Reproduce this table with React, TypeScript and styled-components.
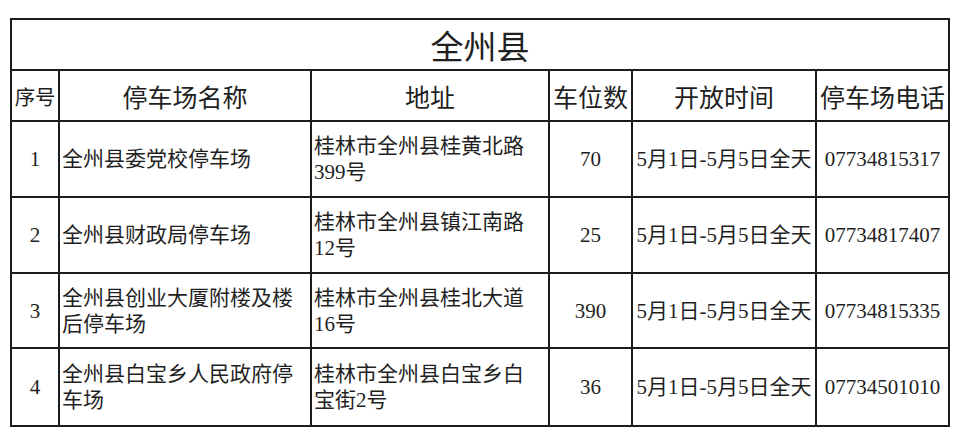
import styled, { createGlobalStyle } from "styled-components";

type Lot = {
  no: number;
  name: string[];
  address: string[];
  spaces: number;
  hours: string;
  phone: string;
};

const lots: Lot[] = [
  {
    no: 1,
    name: ["全州县委党校停车场"],
    address: ["桂林市全州县桂黄北路", "399号"],
    spaces: 70,
    hours: "5月1日-5月5日全天",
    phone: "07734815317",
  },
  {
    no: 2,
    name: ["全州县财政局停车场"],
    address: ["桂林市全州县镇江南路", "12号"],
    spaces: 25,
    hours: "5月1日-5月5日全天",
    phone: "07734817407",
  },
  {
    no: 3,
    name: ["全州县创业大厦附楼及楼", "后停车场"],
    address: ["桂林市全州县桂北大道", "16号"],
    spaces: 390,
    hours: "5月1日-5月5日全天",
    phone: "07734815335",
  },
  {
    no: 4,
    name: ["全州县白宝乡人民政府停", "车场"],
    address: ["桂林市全州县白宝乡白", "宝街2号"],
    spaces: 36,
    hours: "5月1日-5月5日全天",
    phone: "07734501010",
  },
];

const heights = [76, 76, 75, 78];

const columns = [
  { label: "序号", width: 48, small: true },
  { label: "停车场名称", width: 252 },
  { label: "地址", width: 238 },
  { label: "车位数", width: 83 },
  { label: "开放时间", width: 184 },
  { label: "停车场电话", width: 133 },
];

const GlobalStyle = createGlobalStyle`
  html, body {
    margin: 0;
    padding: 0;
    background: #ffffff;
  }
  body {
    font-family: "Liberation Serif", "Noto Sans CJK SC", serif;
    color: #1f1f1f;
  }
`;

const Page = styled.div`
  width: 960px;
  height: 442px;
  padding: 18px 0 0 10px;
  box-sizing: border-box;
`;

const Table = styled.table`
  border-collapse: collapse;
  table-layout: fixed;
  width: 940px;
`;

const TitleCell = styled.th`
  height: 49px;
  border: 2px solid #1c1c1c;
  font-family: "Noto Sans CJK SC", sans-serif;
  font-size: 33px;
  font-weight: 400;
  line-height: 40px;
  text-align: center;
  vertical-align: middle;
  padding: 0;
`;

const HeadCell = styled.th<{ $small?: boolean }>`
  height: 49px;
  border: 2px solid #1c1c1c;
  font-family: "Noto Sans CJK SC", sans-serif;
  font-size: ${(p) => (p.$small ? "20.5px" : "25px")};
  font-weight: 400;
  line-height: 30px;
  text-align: center;
  vertical-align: middle;
  padding: 0;
  white-space: nowrap;
  letter-spacing: ${(p) => (p.$small ? "-0.3px" : "0")};
`;

const Cell = styled.td<{ $align?: "left" | "center" }>`
  border: 2px solid #1c1c1c;
  font-size: 21px;
  line-height: 26px;
  text-align: ${(p) => p.$align ?? "center"};
  vertical-align: middle;
  padding: 0 0 0 ${(p) => (p.$align === "left" ? "2px" : "0")};
  white-space: nowrap;
  overflow: visible;
`;

const Line = styled.div`
  display: block;
`;

export default function App() {
  return (
    <>
      <GlobalStyle />
      <Page>
        <Table>
          <colgroup>
            {columns.map((c) => (
              <col key={c.label} style={{ width: c.width }} />
            ))}
          </colgroup>
          <thead>
            <tr>
              <TitleCell colSpan={6}>全州县</TitleCell>
            </tr>
            <tr>
              {columns.map((c) => (
                <HeadCell key={c.label} $small={c.small}>
                  {c.label}
                </HeadCell>
              ))}
            </tr>
          </thead>
          <tbody>
            {lots.map((lot, i) => (
              <tr key={lot.no} style={{ height: heights[i] }}>
                <Cell>{lot.no}</Cell>
                <Cell $align="left">
                  {lot.name.map((l) => (
                    <Line key={l}>{l}</Line>
                  ))}
                </Cell>
                <Cell $align="left">
                  {lot.address.map((l) => (
                    <Line key={l}>{l}</Line>
                  ))}
                </Cell>
                <Cell>{lot.spaces}</Cell>
                <Cell>{lot.hours}</Cell>
                <Cell>{lot.phone}</Cell>
              </tr>
            ))}
          </tbody>
        </Table>
      </Page>
    </>
  );
}
